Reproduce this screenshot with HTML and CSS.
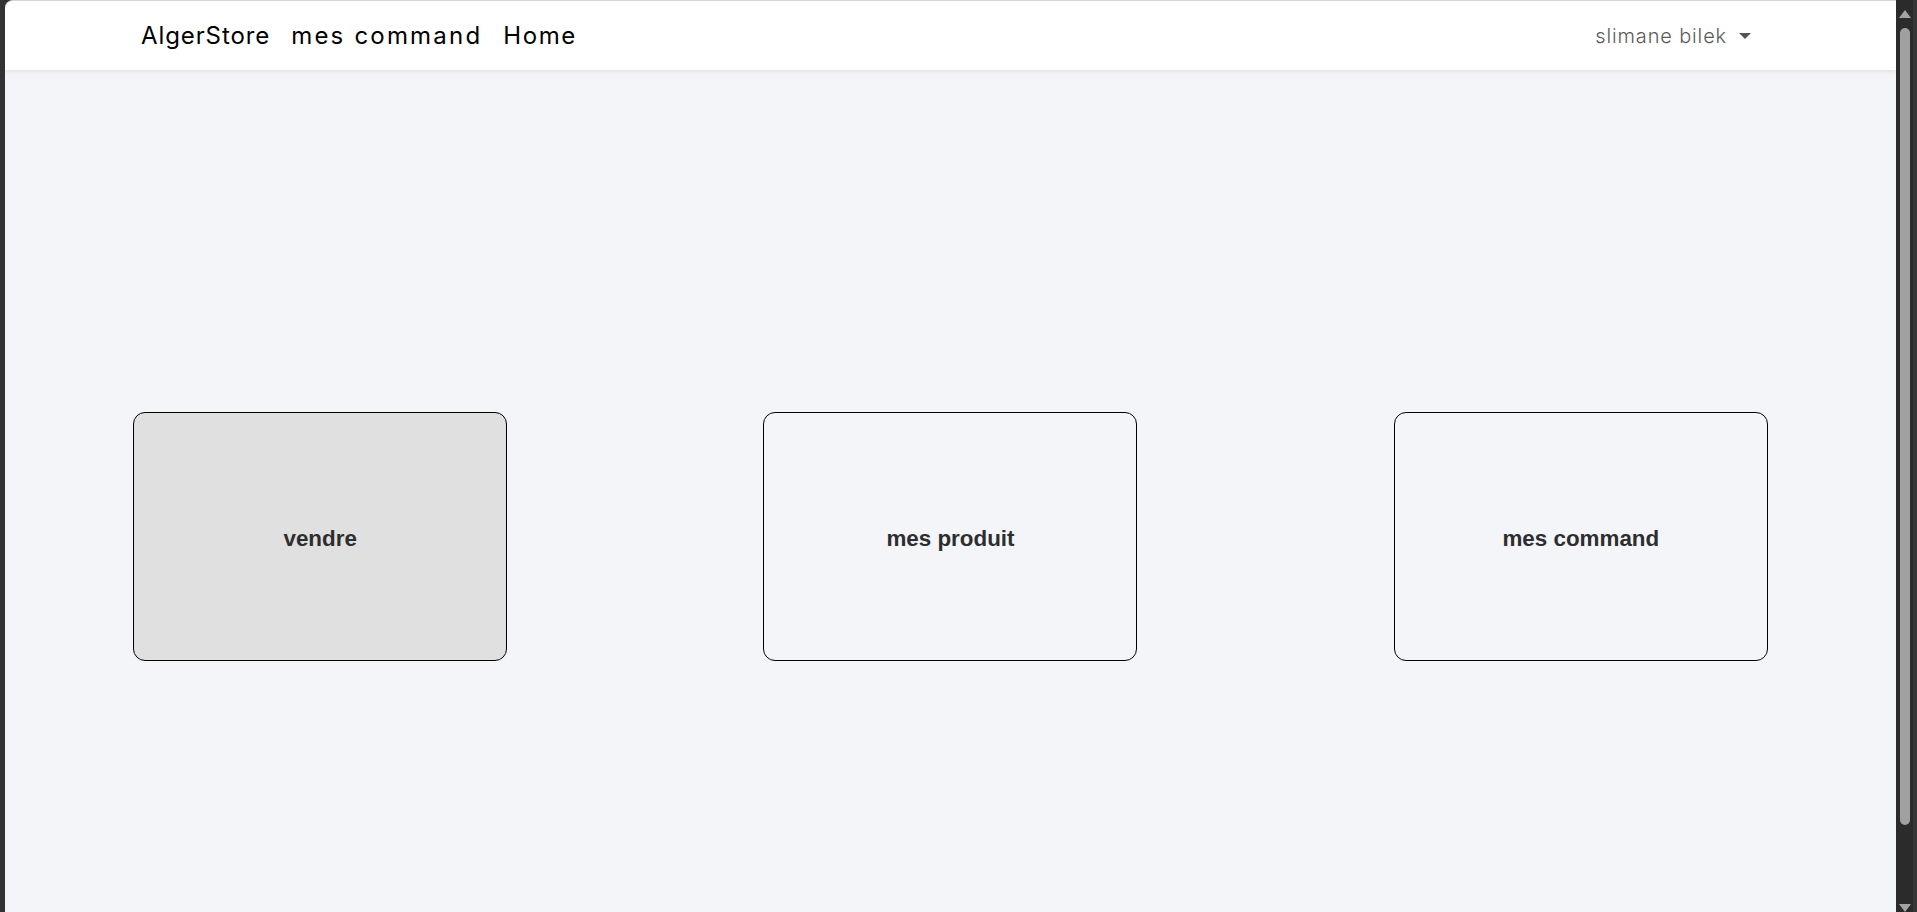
FILE: index.html
```html
<!DOCTYPE html>
<html lang="fr">
<head>
<meta charset="utf-8">
<title>AlgerStore</title>
<link rel="stylesheet" href="styles.css">
</head>
<body>
<div class="window">
  <div class="page">
    <nav class="navbar">
      <div class="nav-left">
        <a class="brand" href="#">AlgerStore</a>
        <a class="nav-link nav-link-wide" href="#">mes command</a>
        <a class="nav-link nav-link-home" href="#">Home</a>
      </div>
      <div class="nav-right">
        <a class="user" href="#">slimane bilek<span class="caret"></span></a>
      </div>
    </nav>
    <main class="dashboard">
      <a class="tile tile-active" href="#">vendre</a>
      <a class="tile" href="#">mes produit</a>
      <a class="tile" href="#">mes command</a>
    </main>
  </div>
  <div class="scrollbar">
    <span class="arrow arrow-up"></span>
    <span class="thumb"></span>
    <span class="arrow arrow-down"></span>
  </div>
</div>
</body>
</html>
```

FILE: styles.css
```css
* { box-sizing: border-box; }

html, body {
  margin: 0;
  height: 100%;
  overflow: hidden;
}

body {
  background: #333333;
  font-family: "Inter", "Liberation Sans", sans-serif;
}

.window {
  display: flex;
  height: 100vh;
}

.page {
  flex: 1;
  margin-left: 5px;
  border-top: 1px solid #d4d4d4;
  border-top-left-radius: 8px;
  background: #f4f5f9;
  overflow: hidden;
  display: flex;
  flex-direction: column;
}

.navbar {
  height: 69px;
  flex: none;
  background: #ffffff;
  box-shadow: 0 1px 5px rgba(0, 0, 0, 0.1);
  display: flex;
  align-items: center;
  justify-content: space-between;
  padding: 0 145px 0 136px;
  position: relative;
  z-index: 1;
}

.nav-left {
  display: flex;
  align-items: center;
  gap: 21px;
}

.nav-left a {
  color: #000;
  text-decoration: none;
  font-size: 24px;
  font-weight: 400;
  letter-spacing: 0.9px;
}

.nav-left .nav-link-wide {
  letter-spacing: 2.2px;
}

.nav-left .nav-link-home {
  letter-spacing: 1.6px;
}

.user {
  color: #5a5a5a;
  text-decoration: none;
  font-size: 20px;
  font-weight: 300;
  letter-spacing: 0.85px;
  display: flex;
  align-items: center;
}

.caret {
  display: inline-block;
  width: 0;
  height: 0;
  margin-left: 12px;
  border-left: 6px solid transparent;
  border-right: 6px solid transparent;
  border-top: 6px solid #555;
}

.dashboard {
  flex: 1;
  display: flex;
  justify-content: space-around;
  align-items: flex-start;
  padding-top: 342px;
}

.tile {
  width: 374px;
  height: 249px;
  border: 1px solid #000;
  border-radius: 12px;
  display: flex;
  align-items: center;
  justify-content: center;
  padding-top: 4px;
  font-family: "Liberation Sans", Arial, sans-serif;
  font-weight: 700;
  font-size: 22.4px;
  color: #2e2e2e;
  text-decoration: none;
}

.tile-active {
  background: #e0e0e0;
}

.scrollbar {
  width: 21px;
  flex: none;
  background: #2b2b2b;
  border-right: 4px solid #363636;
  display: flex;
  flex-direction: column;
  align-items: center;
  padding: 10px 0 0;
}

.arrow {
  width: 0;
  height: 0;
  border-left: 6px solid transparent;
  border-right: 6px solid transparent;
  flex: none;
}

.arrow-up {
  border-bottom: 8px solid #a3a3a3;
}

.arrow-down {
  border-top: 8px solid #a3a3a3;
  margin-top: auto;
}

.thumb {
  width: 10px;
  height: 797px;
  margin-top: 10px;
  border-radius: 5px;
  background: #a0a0a0;
}
```
